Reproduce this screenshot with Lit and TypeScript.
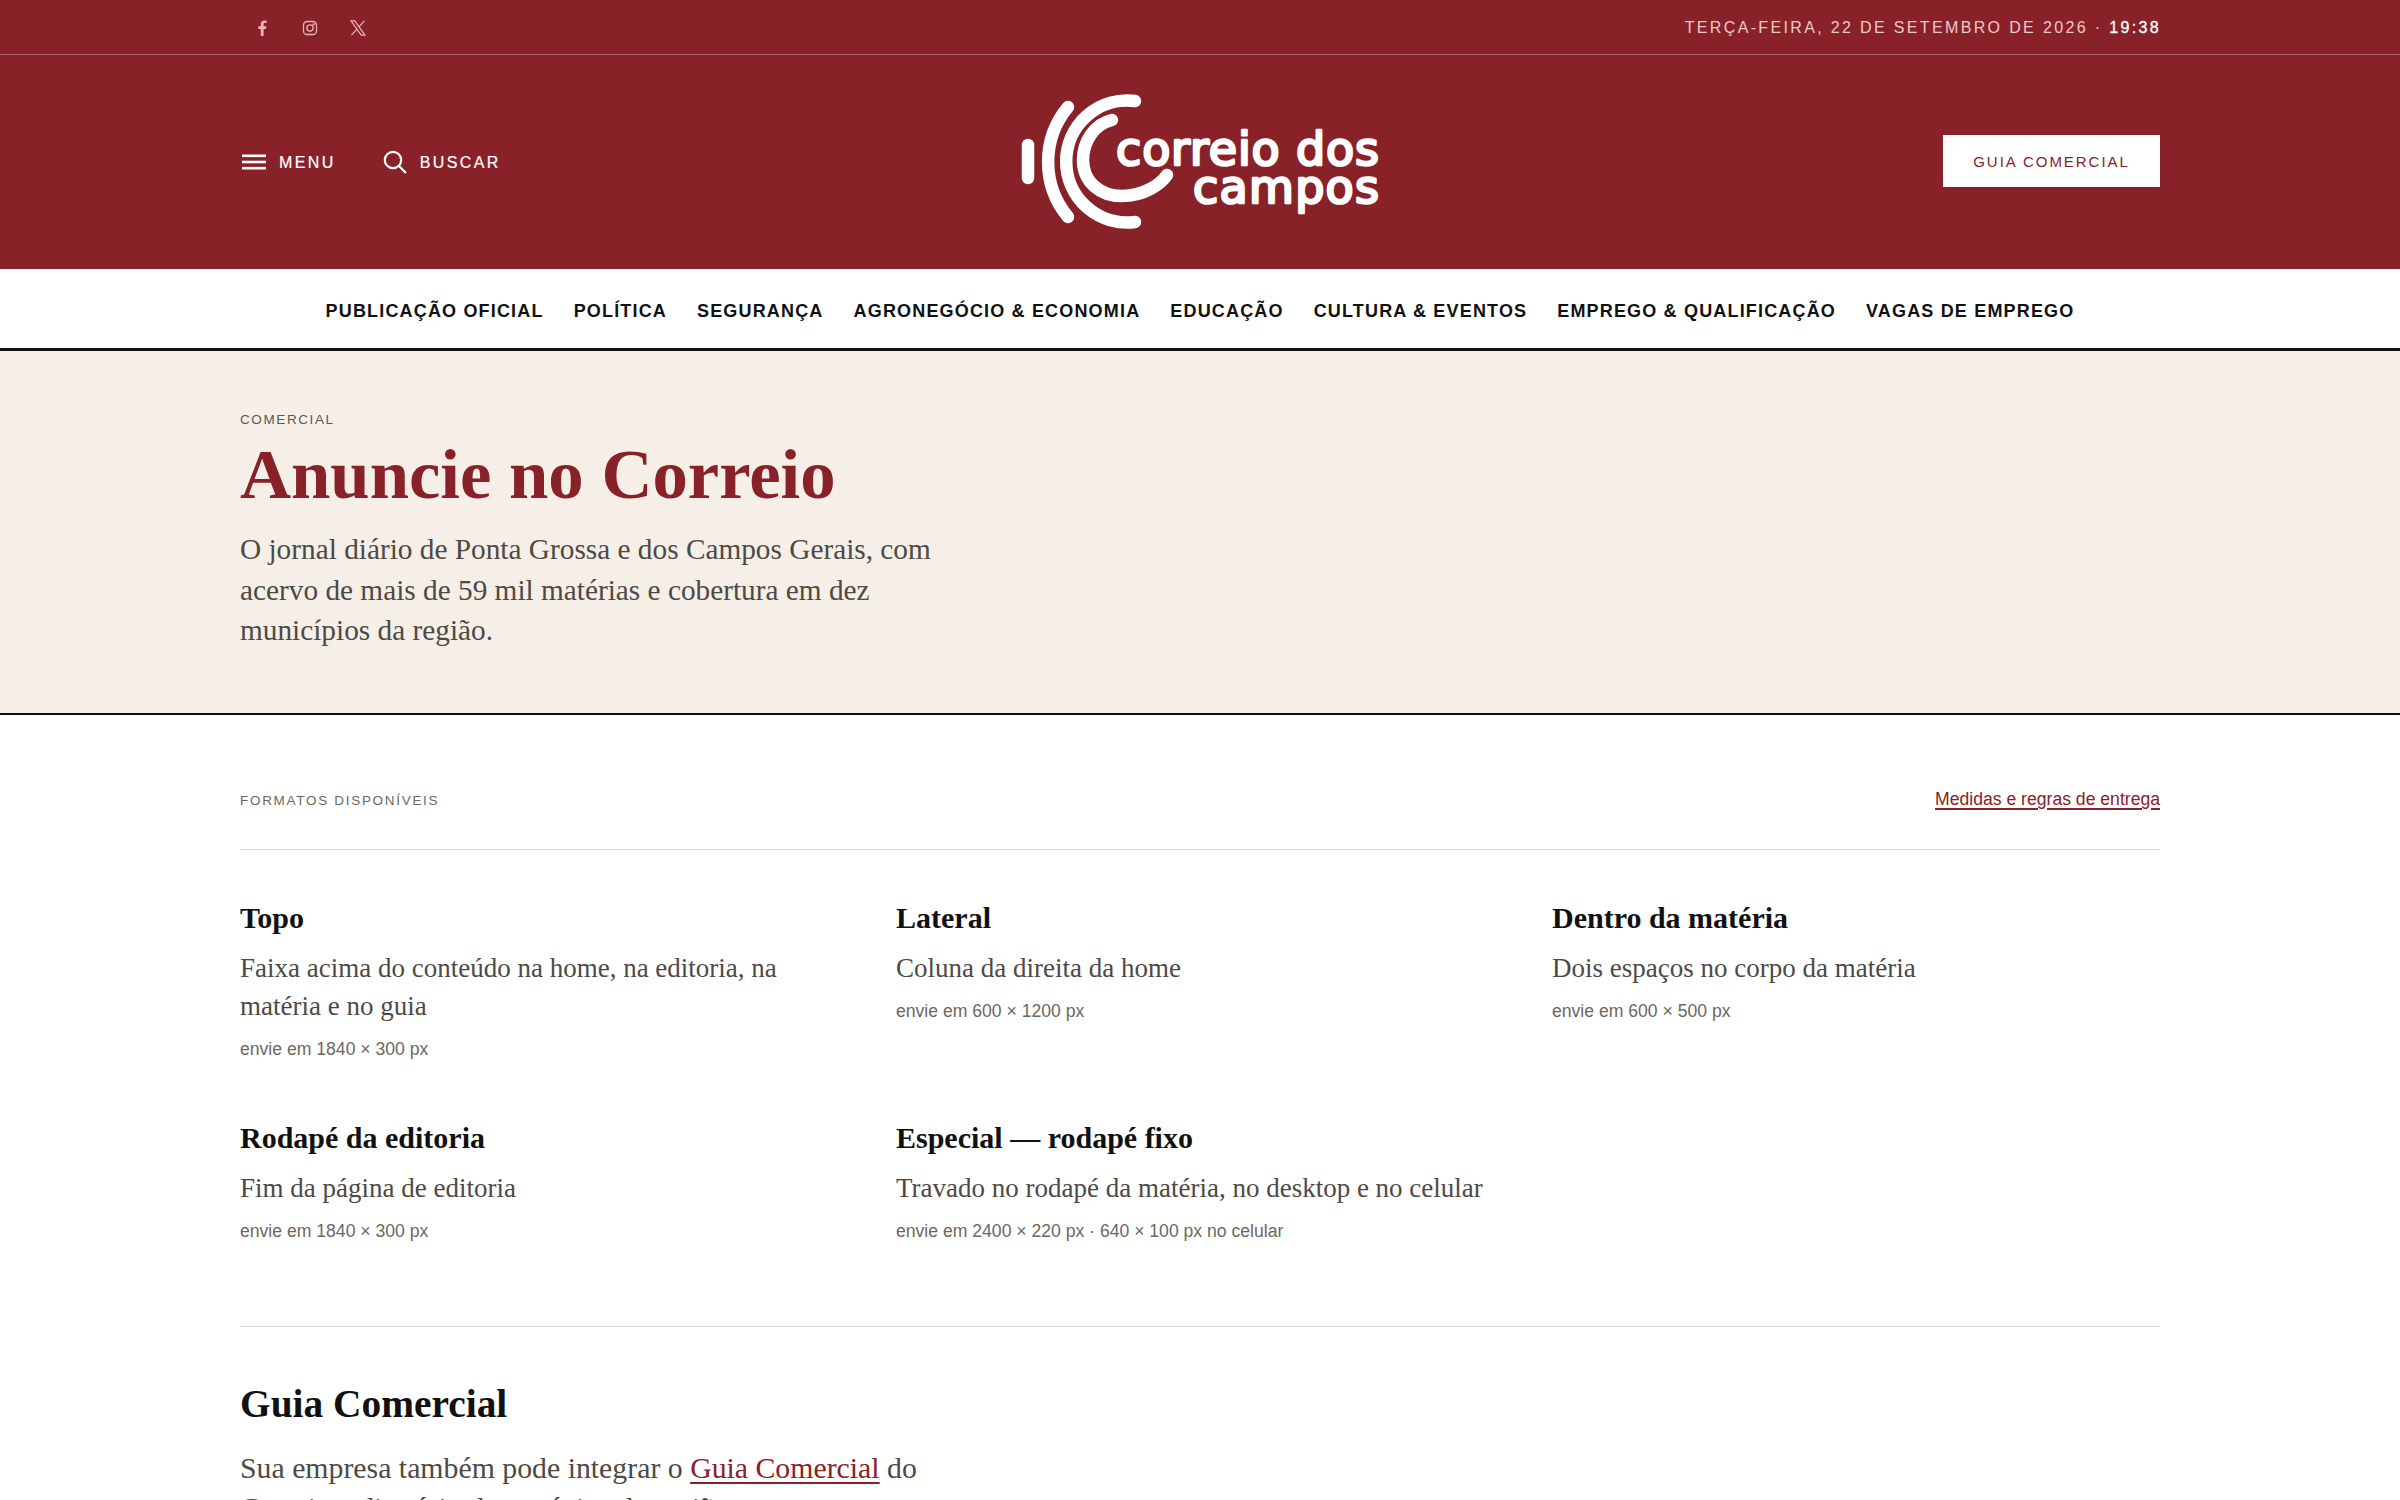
import { LitElement, html, css, svg } from "lit";
import { customElement } from "lit/decorators.js";

const NAV = ["PUBLICAÇÃO OFICIAL","POLÍTICA","SEGURANÇA","AGRONEGÓCIO & ECONOMIA","EDUCAÇÃO","CULTURA & EVENTOS","EMPREGO & QUALIFICAÇÃO","VAGAS DE EMPREGO"];
const FORMATS = [
  { t: "Topo", d: "Faixa acima do conteúdo na home, na editoria, na matéria e no guia", s: "envie em 1840 × 300 px" },
  { t: "Lateral", d: "Coluna da direita da home", s: "envie em 600 × 1200 px" },
  { t: "Dentro da matéria", d: "Dois espaços no corpo da matéria", s: "envie em 600 × 500 px" },
  { t: "Rodapé da editoria", d: "Fim da página de editoria", s: "envie em 1840 × 300 px" },
  { t: "Especial — rodapé fixo", d: "Travado no rodapé da matéria, no desktop e no celular", s: "envie em 2400 × 220 px · 640 × 100 px no celular" },
];

@customElement("app-root")
export class AppRoot extends LitElement {
  static styles = css`
    :host { display: block; height: 1500px; overflow: hidden; background: #fff; font-family: "Liberation Sans", Arial, sans-serif; }
    a { color: inherit; text-decoration: none; }
    .wrap { width: 1920px; margin: 0 auto; }
    .mast { background: #882228; color: #fff; height: 269px; }
    .top { height: 54px; border-bottom: 1px solid rgba(255,255,255,.3); }
    .top .wrap { height: 54px; display: flex; justify-content: space-between; align-items: center; }
    .social { display: flex; gap: 24px; padding-left: 10px; padding-top: 1px; color: #e9b4b5; }
    .social svg { width: 24px; height: 24px; display: block; }
    .date { font-size: 16px; letter-spacing: 2.35px; color: #efc9c9; white-space: nowrap; margin-right: -1px; padding-top: 2px; }
    .date b { color: #fff; font-weight: 400; -webkit-text-stroke: .3px #fff; }
    .brand { height: 214px; }
    .brand .wrap { height: 214px; display: grid; grid-template-columns: 1fr auto 1fr; align-items: center; }
    .tools { display: flex; gap: 47px; font-size: 16px; letter-spacing: 2.4px; padding-left: 2px; -webkit-text-stroke: .2px #fff; }
    .tools span { display: flex; align-items: center; gap: 13px; }
    .tools b { font-weight: 400; padding-top: 2px; }
    .logo { width: 364px; height: 140px; display: block; }
    .logo text { font-family: "DejaVu Sans", sans-serif; font-size: 46px; fill: #fff; stroke: #fff; stroke-width: 2.6px; stroke-linejoin: round; stroke-linecap: round; }
    .btn { justify-self: end; margin-bottom: 2px; width: 217px; height: 52px; background: #fff; color: #882228; font-size: 15px; letter-spacing: 1.95px; display: flex; align-items: center; justify-content: center; }
    nav { padding-top: 6px; box-sizing: border-box; height: 82px; border-bottom: 3px solid #111; background: #fff; display: flex; justify-content: center; align-items: center; gap: 30px; font-size: 18px; font-weight: 700; letter-spacing: 1.17px; color: #111; }
    .hero { background: #f5efe8; height: 362px; border-bottom: 2px solid #111; }
    .hero .wrap { padding-top: 61px; }
    .eyebrow { font-size: 13.5px; letter-spacing: 1.6px; color: #5c5850; line-height: 16px; }
    h1 { margin: 13px 0 0; font-family: "Liberation Serif", serif; font-size: 70.7px; line-height: 66px; font-weight: 700; color: #882228; }
    .lead { margin: 22px 0 0; width: 720px; font-family: "Liberation Serif", serif; font-size: 29.3px; line-height: 40.5px; color: #4d4a44; }
    .fmt-head { display: flex; justify-content: space-between; align-items: center; padding-top: 74px; padding-bottom: 36px; height: 24px; box-sizing: content-box; border-bottom: 1.5px solid #d9d9d9; }
    .fmt-head .eyebrow { letter-spacing: 1.7px; color: #6b6862; }
    .fmt-head a { margin-top: -3px; font-size: 17.6px; color: #882228; text-decoration: underline; text-underline-offset: 3px; text-decoration-thickness: 1.5px; }
    .grid { display: grid; grid-template-columns: repeat(3, 608px); column-gap: 48px; row-gap: 58px; padding-top: 50px; padding-bottom: 82px; border-bottom: 1.5px solid #d9d9d9; }
    h3 { margin: 0; font-family: "Liberation Serif", serif; font-size: 30px; line-height: 36px; font-weight: 700; color: #111; }
    .d { margin: 14px 0 0; font-family: "Liberation Serif", serif; font-size: 27px; line-height: 37.5px; color: #4d4a44; }
    .s { margin: 10.5px 0 0; font-size: 17.6px; line-height: 26px; color: #6b6862; }
    h2 { margin: 54px 0 0; font-family: "Liberation Serif", serif; font-size: 39.4px; line-height: 46px; font-weight: 700; color: #111; }
    .guide { margin: 21px 0 0; width: 720px; font-family: "Liberation Serif", serif; font-size: 29.8px; line-height: 40.5px; color: #4d4a44; }
    .guide a { color: #882228; text-decoration: underline; text-underline-offset: 4px; }
  `;

  logo() {
    return svg`<svg class="logo" viewBox="0 0 364 140">
      <g fill="none" stroke="#fff" stroke-linecap="round" stroke-width="12.5">
        <path d="M10 53 V86"/>
        <path d="M50 15 A86 86 0 0 0 50 125"/>
        <path d="M117 9 A61 61 0 1 0 117 130"/>
        <path d="M94 28 C76 32 65 50 65 68 C65 90 82 104 104 104 C126 104 143 92 149 83"/>
      </g>
      <text x="98" y="73" textLength="263">correio dos</text>
      <text x="175" y="111" textLength="186">campos</text>
    </svg>`;
  }

  render() {
    return html`
      <header class="mast">
        <div class="top"><div class="wrap">
          <div class="social">
            <svg viewBox="0 0 24 24" fill="currentColor"><path d="M13.6 20v-7h2.4l.4-2.8h-2.8V8.5c0-.9.3-1.4 1.4-1.4h1.5V4.6c-.3 0-1.1-.1-2.1-.1-2.2 0-3.6 1.3-3.6 3.7v2H8.3V13h2.5v7z"/></svg>
            <svg viewBox="0 0 24 24" fill="none" stroke="currentColor" stroke-width="1.3"><rect x="5.5" y="5.5" width="13" height="13" rx="3.6"/><circle cx="12" cy="12" r="3.1"/><circle cx="15.6" cy="8.4" r=".5" fill="currentColor"/></svg>
            <svg viewBox="0 0 24 24" fill="none" stroke="currentColor" stroke-width="1.2"><path d="M5 4.8h3.8l10.2 14.4h-3.8z"/><path d="M18.4 4.8l-5.6 6.3M11 13.2l-5.6 6"/></svg>
          </div>
          <div class="date">TERÇA-FEIRA, 22 DE SETEMBRO DE 2026 · <b>19:38</b></div>
        </div></div>
        <div class="brand"><div class="wrap">
          <div class="tools">
            <span><svg width="24" height="16" viewBox="0 0 24 16" fill="#fff"><rect y="0.5" width="24" height="2.6"/><rect y="6.7" width="24" height="2.6"/><rect y="12.9" width="24" height="2.6"/></svg><b>MENU</b></span>
            <span><svg width="24" height="24" viewBox="0 0 24 24" fill="none" stroke="#fff" stroke-width="2.2"><circle cx="10" cy="10" r="8.2"/><path d="M16 16l7 7"/></svg><b>BUSCAR</b></span>
          </div>
          ${this.logo()}
          <a class="btn">GUIA COMERCIAL</a>
        </div></div>
      </header>
      <nav>${NAV.map((n) => html`<a>${n}</a>`)}</nav>
      <section class="hero"><div class="wrap">
        <div class="eyebrow">COMERCIAL</div>
        <h1>Anuncie no Correio</h1>
        <p class="lead">O jornal diário de Ponta Grossa e dos Campos Gerais, com acervo de mais de 59 mil matérias e cobertura em dez municípios da região.</p>
      </div></section>
      <main class="wrap">
        <div class="fmt-head"><span class="eyebrow">FORMATOS DISPONÍVEIS</span><a>Medidas e regras de entrega</a></div>
        <div class="grid">
          ${FORMATS.map((f) => html`<div><h3>${f.t}</h3><p class="d">${f.d}</p><p class="s">${f.s}</p></div>`)}
        </div>
        <h2>Guia Comercial</h2>
        <p class="guide">Sua empresa também pode integrar o <a>Guia Comercial</a> do Correio e diretório de negócios da região.</p>
      </main>
    `;
  }
}
